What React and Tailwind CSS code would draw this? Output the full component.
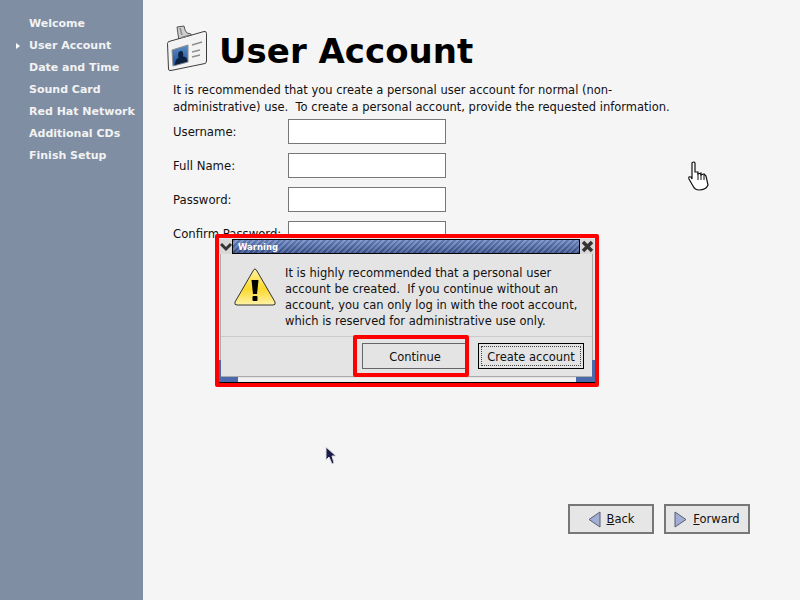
const font = { fontFamily: '"DejaVu Sans", sans-serif' };

const steps = ['Welcome', 'User Account', 'Date and Time', 'Sound Card', 'Red Hat Network', 'Additional CDs', 'Finish Setup'];
const fields = ['Username:', 'Full Name:', 'Password:', 'Confirm Password:'];

const BadgeIcon = () => (
  <svg width="40" height="47" viewBox="0 0 40 47" className="shrink-0">
    <defs>
      <linearGradient id="photo" x1="0" y1="0" x2="0" y2="1">
        <stop offset="0%" stopColor="#5d8cc4" />
        <stop offset="100%" stopColor="#1d4f96" />
      </linearGradient>
    </defs>
    <path d="M10 2 L17 1 L18 5 L20 8 L24 9 L25 13 L12 16 Z" fill="#cfcfcf" stroke="#555" strokeWidth="1" />
    <path d="M13 3 L15 10" stroke="#8a8a8a" strokeWidth="1.5" />
    <path d="M0.5 18.5 Q0.5 17 2 16.5 L37 6.5 Q39.5 6 39.5 8.5 L39.5 36 Q39.5 38 38 38.5 L4 45.5 Q1.5 46 1.5 44 Z" fill="#f3f3f3" stroke="#3c3c3c" strokeWidth="1" />
    <path d="M15 12.5 L22 10.5" stroke="#777" strokeWidth="1.5" />
    <path d="M5 25 L21 20 L21 37 L6 41 Z" fill="url(#photo)" stroke="#8c8c8c" strokeWidth="1" />
    <path d="M8 40 Q8 34 11.5 33 Q10 27 13.5 26 Q17 25.5 16 31.5 Q20 31.5 20.5 36.5 Z" fill="#0c2140" />
    <path d="M25 20 L35 17 M25 27 L33 25 M25 32 L33 30" stroke="#8f8f8f" strokeWidth="1.6" />
  </svg>
);

const WarningIcon = () => (
  <svg width="44" height="40" viewBox="0 0 44 40" className="shrink-0">
    <defs>
      <linearGradient id="warn" x1="0" y1="0" x2="0" y2="1">
        <stop offset="0%" stopColor="#fff3a0" />
        <stop offset="55%" stopColor="#fbd92c" />
        <stop offset="100%" stopColor="#fff2a8" />
      </linearGradient>
    </defs>
    <path d="M22 2 Q23 2 24 4 L42 35 Q43 38 40 38 L4 38 Q1 38 2 35 L20 4 Q21 2 22 2 Z" fill="url(#warn)" stroke="#333" strokeWidth="1" />
    <path d="M18.5 13 L25.5 13 L24 27 L20 27 Z" fill="#000" />
    <rect x="19.5" y="29" width="5" height="5" rx="1" fill="#000" />
  </svg>
);

const Arrow = ({ dir }) => (
  <svg width="13" height="17" viewBox="0 0 13 17" className="shrink-0">
    <path d={dir === 'left' ? 'M12 1 L12 16 L1 8.5 Z' : 'M1 1 L1 16 L12 8.5 Z'} fill="#a3aed6" stroke="#5a5f70" strokeWidth="1" />
  </svg>
);

const NavButton = ({ children }) => (
  <button className="flex h-[30px] w-[86px] items-center justify-center gap-[6px] border-2 border-[#777] bg-[#e6e6e6] text-[11.5px] text-[#111]" style={font}>
    {children}
  </button>
);

export default function App() {
  return (
    <div className="relative flex h-[600px] w-[800px] overflow-hidden bg-[#f5f5f5] text-[11.5px] text-black" style={font}>
      {/* steps */}
      <div className="flex w-[143px] shrink-0 flex-col bg-[#7f8ea3] pt-[13px]">
        {steps.map((s, i) => (
          <div key={s} className="relative flex h-[22px] items-center whitespace-nowrap pl-[29px] text-[11px] font-bold text-[#f2f2f2]">
            {i === 1 && <span className="absolute left-[16px] top-[8px] h-0 w-0 border-y-[3px] border-l-[4px] border-y-transparent border-l-white" />}
            {s}
          </div>
        ))}
      </div>

      {/* main page */}
      <div className="flex flex-1 flex-col">
        <div className="flex h-[82px] items-end gap-[12px] pb-[10px] pl-[24px]">
          <BadgeIcon />
          <h1 className="text-[34px] font-bold leading-[42px] text-black">User Account</h1>
        </div>
        <p className="ml-[30px] w-[540px] whitespace-pre-line text-[11.5px] leading-[17px] text-[#111]">
          {'It is recommended that you create a personal user account for normal (non-\nadministrative) use.\u00a0\u00a0To create a personal account, provide the requested information.'}
        </p>
        <div className="ml-[30px] mt-[3px] flex flex-col gap-[9px]">
          {fields.map((f) => (
            <div key={f} className="flex h-[25px] items-center">
              <span className="w-[115px] whitespace-nowrap pt-[2px] text-[11.7px] text-[#111]">{f}</span>
              <input className="h-[25px] w-[158px] border border-[#777] bg-white" readOnly />
            </div>
          ))}
        </div>
        <div className="mr-[50px] mt-auto mb-[66px] flex justify-end gap-[10px]">
          <NavButton>
            <Arrow dir="left" />
            <span className="pt-[2px]"><u>B</u>ack</span>
          </NavButton>
          <NavButton>
            <Arrow dir="right" />
            <span className="pt-[2px]"><u>F</u>orward</span>
          </NavButton>
        </div>
      </div>

      {/* warning dialog with red annotation */}
      <div className="absolute left-[215px] top-[234px] h-[153px] w-[384px] rounded-[2px] border-[4px] border-[#f00] bg-[#e4e4e4]">
        <div className="mt-[1px] flex h-[15px] items-stretch">
          <div className="flex w-[13px] items-center justify-center bg-[#d8d8d8]">
            <svg width="12" height="10" viewBox="0 0 12 10"><path d="M1 2 L6 7 L11 2" fill="none" stroke="#333" strokeWidth="3" /></svg>
          </div>
          <div className="flex w-[348px] items-center border border-black bg-[linear-gradient(180deg,#ffffff30,#00000030),repeating-linear-gradient(135deg,#3f5ea4_0px,#3f5ea4_2px,#6c86bf_2px,#6c86bf_4px)] pl-[5px] pt-[1px] text-[8.5px] font-bold text-white">
            Warning
          </div>
          <div className="flex w-[14px] items-center justify-center bg-[#d8d8d8]">
            <svg width="13" height="13" viewBox="0 0 13 13"><path d="M2 2 L11 11 M11 2 L2 11" stroke="#333" strokeWidth="3.5" /></svg>
          </div>
        </div>
        <div className="flex gap-[8px] pl-[14px] pt-[13px]">
          <WarningIcon />
          <p className="-mt-[2px] w-[305px] whitespace-pre-line text-[11.5px] leading-[16px] text-[#111]">
            {'It is highly recommended that a personal user\naccount be created.\u00a0\u00a0If you continue without an\naccount, you can only log in with the root account,\nwhich is reserved for administrative use only.'}
          </p>
        </div>
        <div className="mx-[2px] mt-[7px] border-t border-[#ccc]" />

        {/* window frame and resize corners */}
        <div className="absolute left-[1px] right-[2px] top-[16px] bottom-[6px] border-x border-b border-[#aaa]" />
        <div className="absolute bottom-[1px] left-0 right-0 h-[4px] bg-[#f0f0f0]" />
        <div className="absolute bottom-0 left-0 right-0 h-[1px] bg-black" />
        <div className="absolute bottom-[1px] left-0 h-[22px] w-[2px] bg-[#4a6aab]" />
        <div className="absolute bottom-[1px] left-0 h-[5px] w-[19px] bg-[#4a6aab]" />
        <div className="absolute bottom-[1px] right-0 h-[22px] w-[3px] bg-[#4a6aab]" />
        <div className="absolute bottom-[1px] right-0 h-[5px] w-[19px] bg-[#4a6aab]" />

        <div className="absolute left-[259px] top-[105px] flex h-[26px] w-[106px] items-center justify-center border border-black p-[2px]">
          <span className="flex h-full w-full items-center justify-center border border-dotted border-[#444] pt-[4px] text-[11.5px] text-[#111]">Create account</span>
        </div>
        <span className="absolute left-[143px] top-[105px] flex h-[26px] w-[106px] items-center justify-center border border-[#666] pt-[4px] text-[11.5px] text-[#111]">Continue</span>
        <div className="absolute left-[134px] top-[97px] h-[42px] w-[116px] rounded-[2px] border-[4px] border-[#f00]" />
      </div>

      {/* hand pointer */}
      <svg width="24" height="30" viewBox="0 0 24 30" className="absolute left-[687px] top-[161px]">
        <path d="M5 2 Q7 0 8 2 L8 11 L11 11 L11 13 L14 12 L14 14 L17 13 L19 15 L21 24 Q19 29 12 29 Q8 29 6 25 L2 18 Q1 15 4 16 L5 18 Z" fill="#fff" stroke="#111" strokeWidth="1.2" />
        <path d="M11 12 L11 19 M14 13 L14 19 M17 14 L17 19" stroke="#111" strokeWidth="1" />
      </svg>

      {/* arrow pointer */}
      <svg width="14" height="20" viewBox="0 0 14 20" className="absolute left-[324px] top-[446px]">
        <path d="M2 1 L2 14 L5 11 L8 18 L10 17 L8 10 L12 10 Z" fill="#1c1c4a" stroke="#ddd" strokeWidth="1" />
      </svg>
    </div>
  );
}
